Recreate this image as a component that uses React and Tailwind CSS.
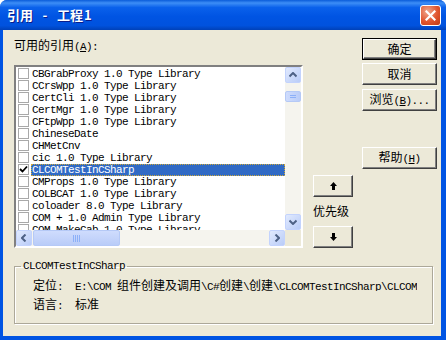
import React from "react";

const MONO = "font-['Liberation_Mono',monospace] text-[11px] leading-[12px] tracking-[-0.6px]";
const CJK = "font-['Noto_Sans_CJK_SC',sans-serif] text-[12px] leading-[12px]";

function T({ text, className = "" }) {
  const parts = text.match(/[\x00-\x7F]+|[^\x00-\x7F]+/g) || [];
  return (
    <span className={"whitespace-pre " + className}>
      {parts.map((p, i) =>
        /^[\x00-\x7F]+$/.test(p) ? (
          <span key={i} className={MONO}>{p}</span>
        ) : (
          <span key={i} className={CJK}>{p}</span>
        )
      )}
    </span>
  );
}

function Accel({ pre, k, post }) {
  return (
    <span className="whitespace-pre">
      <span className={CJK}>{pre}</span>
      <span className={MONO}>(</span>
      <span className={MONO + " underline underline-offset-[1px]"}>{k}</span>
      <span className={MONO}>{")" + post}</span>
    </span>
  );
}

function Btn({ children, def = false, className = "" }) {
  const inner = (
    <div className="flex h-full w-full items-center justify-center border border-t-white border-l-white border-b-[#404040] border-r-[#404040] bg-[#ECE9D8] shadow-[inset_-1px_-1px_0_#808080] text-black">
      {children}
    </div>
  );
  return def ? (
    <div className={"border border-black " + className}>{inner}</div>
  ) : (
    <div className={className}>{inner}</div>
  );
}

function Chevron({ dir }) {
  const rot = { up: 0, down: 180, left: -90, right: 90 }[dir];
  return (
    <svg width="8" height="6" viewBox="0 0 8 6" style={{ transform: `rotate(${rot}deg)` }}>
      <path d="M0.5 4.5 L4 1 L7.5 4.5" fill="none" stroke="#4D6185" strokeWidth="2" />
    </svg>
  );
}

function SBtn({ dir }) {
  return (
    <div className="flex h-[16px] w-[16px] shrink-0 items-center justify-center rounded-[2px] border border-[#C3D3FD] bg-[linear-gradient(135deg,#E1EAFE,#B9CCF8)]">
      <Chevron dir={dir} />
    </div>
  );
}

function Grip({ vertical }) {
  return vertical ? (
    <div className="flex flex-col gap-[1px]">
      <div className="h-[1px] w-[6px] bg-[#8CB0F8]" />
      <div className="h-[1px] w-[6px] bg-[#8CB0F8]" />
    </div>
  ) : (
    <div className="flex gap-[1px]">
      {[0, 1, 2, 3].map((i) => (
        <div key={i} className="h-[7px] w-[1px] bg-[#8CB0F8]" />
      ))}
    </div>
  );
}

const rows = [
  "CBGrabProxy 1.0 Type Library",
  "CCrsWpp 1.0 Type Library",
  "CertCli 1.0 Type Library",
  "CertMgr 1.0 Type Library",
  "CFtpWpp 1.0 Type Library",
  "ChineseDate",
  "CHMetCnv",
  "cic 1.0 Type Library",
  "CLCOMTestInCSharp",
  "CMProps 1.0 Type Library",
  "COLBCAT 1.0 Type Library",
  "coloader 8.0 Type Library",
  "COM + 1.0 Admin Type Library",
  "COM MakeCab 1.0 Type Library",
];

function Arrow({ down }) {
  return (
    <svg width="7" height="8" viewBox="0 0 7 8" style={{ transform: down ? "rotate(180deg)" : "none" }}>
      <path d="M3.5 0 L7 4 H5 V8 H2 V4 H0 Z" fill="#000" />
    </svg>
  );
}

export default function App() {
  return (
    <div className="flex h-[340px] w-[446px] flex-col overflow-hidden rounded-t-[7px] bg-[#0054E3] select-none">
      {/* title bar */}
      <div className="flex h-[30px] shrink-0 items-center justify-between bg-[linear-gradient(to_bottom,#0A5CDA_0%,#3D8EF6_10%,#0A61EB_25%,#0054E3_55%,#0052DE_85%,#0041B8_100%)] pl-[7px] pr-[5px]">
        <div className="flex items-center font-['Noto_Sans_CJK_SC',sans-serif] text-[13px] font-bold text-white [text-shadow:1px_1px_0_#0A1E8C]">
          <span>引用</span>
          <span className="w-[24px] text-center">-</span>
          <span>工程</span>
          <span className="ml-[1px]">1</span>
        </div>
        <div className="flex h-[21px] w-[21px] items-center justify-center rounded-[3px] border border-white bg-[radial-gradient(circle_at_35%_30%,#F0A88E,#E0552F_55%,#C23A12)]">
          <svg width="11" height="11" viewBox="0 0 11 11">
            <path d="M1.5 1.5 L9.5 9.5 M9.5 1.5 L1.5 9.5" stroke="#fff" strokeWidth="2.2" strokeLinecap="square" />
          </svg>
        </div>
      </div>

      {/* body */}
      <div className="mb-[4px] ml-[3px] mr-[5px] flex flex-1 flex-col bg-[#ECE9D8] font-['Liberation_Mono',monospace] text-[11px] leading-[12px] text-black">
        <div className="flex h-[218px] pl-[11px]">
          {/* left column */}
          <div className="flex w-[289px] flex-col pt-[9px]">
            <div className="h-[12px]">
              <Accel pre="可用的引用" k="A" post=":" />
            </div>
            <div className="mt-[14px] flex h-[183px] flex-col border-2 border-t-[#808080] border-l-[#808080] border-b-white border-r-white shadow-[inset_1px_1px_0_#404040,inset_-1px_-1px_0_#D4D0C8] bg-white">
              <div className="flex min-h-0 flex-1">
                <div className="min-w-0 flex-1 overflow-hidden bg-white pl-[2px] pt-[1px]">
                  {rows.map((r, i) => {
                    const sel = i === 8;
                    return (
                      <div key={i} className="flex h-[12px] items-start">
                        <div className="mr-[2px] flex h-[11px] w-[11px] shrink-0 items-center justify-center border border-[#A9A9A9] bg-white">
                          {sel && (
                            <svg width="9" height="9" viewBox="0 0 9 9">
                              <path d="M1 4 L3.5 6.5 L8 1.5" fill="none" stroke="#000" strokeWidth="1.8" />
                            </svg>
                          )}
                        </div>
                        <div
                          className={
                            "h-[12px] flex-1 whitespace-nowrap pl-[1px] " +
                            (sel ? "bg-[#316AC5] text-white outline-1 outline-dotted outline-offset-[-1px] outline-[#CEA83A]" : "")
                          }
                        >
                          <T text={r} />
                        </div>
                      </div>
                    );
                  })}
                </div>
                {/* vertical scrollbar */}
                <div className="flex w-[16px] shrink-0 flex-col bg-[#F5F4EE]">
                  <SBtn dir="up" />
                  <div className="mt-[8px] flex h-[11px] w-[16px] items-center justify-center rounded-[2px] border border-[#B5C9F6] bg-[linear-gradient(to_right,#CFDCFD,#B9CCF8)]">
                    <Grip vertical />
                  </div>
                  <div className="flex-1" />
                  <SBtn dir="down" />
                </div>
              </div>
              {/* horizontal scrollbar */}
              <div className="flex h-[16px] shrink-0 bg-[#F5F4EE]">
                <SBtn dir="left" />
                <div className="ml-[1px] flex h-[16px] w-[87px] items-center justify-center rounded-[2px] border border-[#B5C9F6] bg-[linear-gradient(to_bottom,#CFDCFD,#B9CCF8)]">
                  <Grip />
                </div>
                <div className="flex-1" />
                <SBtn dir="right" />
                <div className="w-[16px] bg-[#ECE9D8]" />
              </div>
            </div>
          </div>

          {/* priority column */}
          <div className="ml-[10px] flex w-[40px] flex-col justify-end">
            <Btn className="h-[22px] w-[40px]">
              <Arrow />
            </Btn>
            <div className="my-[8px] h-[13px]">
              <span className={CJK}>优先级</span>
            </div>
            <Btn className="h-[22px] w-[40px]">
              <Arrow down />
            </Btn>
          </div>

          {/* buttons column */}
          <div className="ml-[9px] flex w-[75px] flex-col pt-[8px]">
            <Btn def className="h-[22px] w-[75px]">
              <span className={CJK}>确定</span>
            </Btn>
            <Btn className="mt-[3px] h-[22px] w-[75px]">
              <span className={CJK}>取消</span>
            </Btn>
            <Btn className="mt-[4px] h-[22px] w-[75px]">
              <Accel pre="浏览" k="B" post="..." />
            </Btn>
            <Btn className="mt-[36px] h-[22px] w-[75px]">
              <Accel pre="帮助" k="H" post="" />
            </Btn>
          </div>
        </div>

        {/* group box */}
        <fieldset className="mx-[11px] mt-[12px] h-[64px] w-[419px] border border-[#ACA899] shadow-[inset_1px_1px_0_#fff,1px_1px_0_#fff]">
          <legend className="ml-[6px] px-[2px]">
            <T text="CLCOMTestInCSharp" />
          </legend>
          <div className="pl-[18px] pt-[7px]">
            <div className="flex h-[12px]">
              <div className="w-[42px] shrink-0">
                <T text="定位:" />
              </div>
              <div className="w-[342px] overflow-hidden whitespace-nowrap">
                <T text="E:\COM 组件创建及调用\C#创建\创建\CLCOMTestInCSharp\CLCOM" />
              </div>
            </div>
            <div className="mt-[7px] flex h-[12px]">
              <div className="w-[42px] shrink-0">
                <T text="语言:" />
              </div>
              <div>
                <T text="标准" />
              </div>
            </div>
          </div>
        </fieldset>
      </div>
    </div>
  );
}
